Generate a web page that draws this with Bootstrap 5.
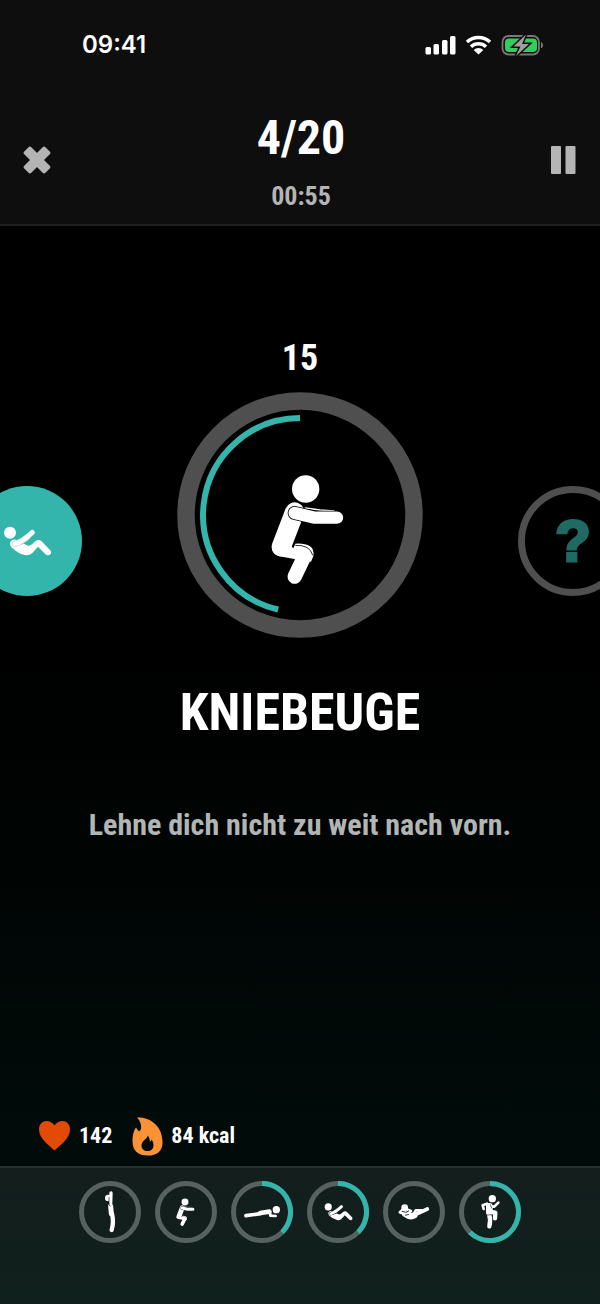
<!DOCTYPE html>
<html lang="de">
<head>
<meta charset="utf-8">
<meta name="viewport" content="width=device-width, initial-scale=1">
<title>Kniebeuge – Workout</title>
<link href="https://cdn.jsdelivr.net/npm/bootstrap@5.3.0/dist/css/bootstrap.min.css" rel="stylesheet">
<style>
  :root { --teal: #33b5ac; --ring: #4f4f4f; }
  body {
    font-family: "Roboto Condensed", "Liberation Sans Narrow", "Liberation Sans", sans-serif;
    font-weight: 700;
    color: #fff;
    background: linear-gradient(#000 50%, #010f0c) #000;
  }
  svg { display: block; }
  .top-panel { background: #0e0e0e; border-bottom: 2px solid #1f1f1f; }
  .status-bar { font: 600 24px/32px Inter, sans-serif; padding: 29px 55px 0 82px; }
  .top-controls { padding: 47px 24px 12px 23px; }
  .icon-btn { color: #b4b4b4; background: none; border: 0; padding: 0; }
  .round-count { font-size: 48px; line-height: 60px; font-weight: 700; }
  .time-left { font-size: 26px; line-height: 32px; color: #b4b4b4; margin-top: 12px; }
  .reps { font-size: 36px; line-height: 40px; margin-top: 112px; }
  .exercise-strip { margin: 14px -28px 0; }
  .side-disc { width: 110px; height: 110px; margin-bottom: 42px; }
  .done-disc { background: var(--teal); color: #8fd4cf; }
  .next-disc { border: 7px solid var(--ring); color: #1f6a63; font: 700 58px/60px "Liberation Sans", sans-serif; -webkit-text-stroke: 3px #1f6a63; }
  .exercise-name { font-size: 52px; line-height: 60px; font-weight: 700; margin: 45px 0 0; }
  .hint { font-size: 30px; line-height: 36px; color: #b1b5b4; margin: 64px 0 0; }
  .stats { font-size: 22px; line-height: 40px; padding: 0 38px 10px; }
  .bottom-panel { color: #131e1d; background: linear-gradient(#131e1d, #10201c); border-top: 2px solid #26302f; padding: 13px 0 61px; gap: 14px; }
  .bone { fill: none; stroke: #fff; stroke-linecap: round; stroke-linejoin: round; }
  .track { fill: none; stroke: #576160; stroke-width: 15; }
  .done-part { fill: none; stroke: var(--teal); stroke-width: 15; }
</style>
</head>
<body class="min-vh-100 d-flex flex-column overflow-x-hidden">

<svg width="0" height="0" class="position-absolute" aria-hidden="true">
  <symbol id="squat" viewBox="0 0 330 390" overflow="visible">
    <circle cx="167" cy="72" r="41" fill="#fff"/>
    <path class="bone" stroke-width="5" d="M166 129 210 135 252 138"/>
    <path class="bone" stroke-width="58" d="M134 141 94 245"/>
    <path fill="#fff" d="M66 250 100 220 130 250 136 236Q164 234 180 244 194 254 190 274L183 290 137 283 88 274Q66 268 66 250Z"/>
    <path class="bone" stroke-width="43" d="M166 268 134 335"/>
    <path class="bone" stroke-width="2.500" style="stroke:#000" d="M137 241Q180 239 188 270"/>
    <path class="bone" stroke-width="42" style="stroke:#000" d="M134 144 195 158 255 158"/>
    <path class="bone" stroke-width="37" d="M134 144 195 158 261 158"/>
  </symbol>
  <symbol id="situp" viewBox="0 0 164 220" overflow="visible">
    <circle cx="30" cy="172" r="18" fill="#fff"/>
    <path fill="#fff" d="M31 200Q38 190 50 194L84 211Q92 212 104 199Q115 190 125 198L152 226Q156 236 147 239Q141 241 135 235L114 214 97 233Q87 242 74 239Q52 233 36 217Q28 210 31 200Z"/>
    <path class="bone" stroke-width="18" style="stroke:currentColor" d="M44 206Q66 200 82 186"/>
    <path class="bone" stroke-width="15" d="M44 206Q66 200 97 171"/>
  </symbol>
</svg>

<header class="top-panel">
  <div class="status-bar d-flex justify-content-between align-items-center">
    <span>09:41</span>
    <svg width="120" height="24" viewBox="0 0 120 24" role="img" aria-label="Empfang, WLAN, Akku lädt">
      <g fill="#fff">
        <rect x="0.500" y="14" width="5.500" height="7.500" rx="1.500"/><rect x="8.500" y="11" width="5.500" height="10.500" rx="1.500"/>
        <rect x="17" y="7" width="5.500" height="14.500" rx="1.500"/><rect x="25" y="3" width="5.500" height="18.500" rx="1.500"/>
        <path d="M48.700 17a6.800 6.800 0 0 1 9.600 0L53.500 21.500Z"/>
      </g>
      <g fill="none" stroke="#fff" stroke-width="3.500"><path d="M42 9a17 17 0 0 1 23 0"/><path d="M46 13.700a11 11 0 0 1 15 0"/></g>
      <rect x="77.500" y="3" width="36.500" height="18.500" rx="6" fill="none" stroke="#777" stroke-width="1.800"/>
      <path d="M116.500 9.500q2.500 2.500 0 5.500z" fill="#777" stroke="#777"/>
      <rect x="80" y="5.500" width="32" height="13.500" rx="4" fill="#32cd5a"/>
      <path d="M101 1.500 88.500 13.500h7L91 23l13-12h-7Z" fill="#a0a0a0" stroke="#0e0e0e" stroke-width="3" paint-order="stroke"/>
    </svg>
  </div>
  <div class="top-controls d-flex justify-content-between align-items-center">
    <button type="button" class="icon-btn" aria-label="Beenden">
      <svg width="28" height="28" viewBox="-14 -14 28 28" fill="currentColor"><rect x="-15" y="-5" width="30" height="10" rx="2" transform="rotate(45)"/><rect x="-15" y="-5" width="30" height="10" rx="2" transform="rotate(-45)"/></svg>
    </button>
    <div class="text-center">
      <h1 class="round-count m-0">4/20</h1>
      <div class="time-left">00:55</div>
    </div>
    <button type="button" class="icon-btn" aria-label="Pause">
      <svg width="25" height="28" viewBox="0 0 25 28" fill="currentColor"><rect width="10" height="28" rx="1"/><rect x="14.500" width="10" height="28" rx="1"/></svg>
    </button>
  </div>
</header>

<main class="flex-grow-1 text-center overflow-hidden">
  <div class="reps">15</div>
  <div class="exercise-strip d-flex justify-content-between align-items-end">
    <div class="side-disc done-disc rounded-circle">
      <svg width="110" height="110" viewBox="-84 32 330 330" role="img" aria-label="Sit-up"><use href="#situp" width="164" height="220"/></svg>
    </div>
    <svg width="246" height="246" viewBox="-123 -123 246 246" role="img" aria-label="Kniebeuge">
      <circle r="114" fill="none" stroke="#4f4f4f" stroke-width="17.500"/>
      <path d="M0-97A97 97 0 0 0-21.800 94.500" fill="none" stroke="#33b5ac" stroke-width="6"/>
      <use href="#squat" x="-50" y="-50" width="110" height="130"/>
    </svg>
    <div class="side-disc next-disc rounded-circle d-flex align-items-center justify-content-center">?</div>
  </div>
  <h2 class="exercise-name">KNIEBEUGE</h2>
  <p class="hint">Lehne dich nicht zu weit nach vorn.</p>
</main>

<div class="stats d-flex align-items-center">
  <svg class="me-2" width="33" height="32" viewBox="0 0 33 32" role="img" aria-label="Puls"><path fill="#e24a06" d="M16.500 30.500C11 25 1 19 1 9.500 1 4 4.500 1 8.500 1c3.500 0 6 1.500 8 4.500C18.500 2.500 21 1 24.500 1 28.500 1 32 4 32 9.500 32 19 22 25 16.500 30.500Z"/></svg>
  <span class="me-3">142</span>
  <svg class="ms-1 me-2" width="31" height="39" viewBox="0 0 31 39" role="img" aria-label="Kalorien"><path fill="#fb9236" fill-rule="evenodd" d="M5 .5C18-.5 30 9 30.500 24 31 34 25 38.500 16 38.500 6 38.500 .5 34 .5 24 .5 18 2 13 4 10.500L6 13.500C7 15 8 14 9 12 9.500 8 8.500 4 5 .5ZM15.500 18.500C16 22 9.500 23 9.500 28.500 9.500 32 12 34 15.500 34 19 34 21.500 32 21.500 28 21.500 26 20.500 23.500 19.500 22.500Q19 25 18 24.500C17.500 22 17.500 20 15.500 18.500Z"/></svg>
  <span>84 kcal</span>
</div>

<footer class="bottom-panel d-flex justify-content-center">
  <svg width="62" height="62" viewBox="0 0 186 186" role="img" aria-label="Strecken">
    <circle class="track" cx="93" cy="93" r="85.500"/>
    <circle cx="88" cy="51" r="10" fill="#fff"/>
    <path class="bone" stroke-width="10" d="M96 36 95 68"/><path class="bone" stroke-width="15" d="M95 76 97 98"/><path class="bone" stroke-width="13" d="M99 98Q105 122 98 147"/>
    <path fill="none" stroke="currentColor" stroke-width="2" d="M90 48v24l5 4"/>
  </svg>
  <svg width="62" height="62" viewBox="0 0 186 186" role="img" aria-label="Kniebeuge">
    <circle class="track" cx="93" cy="93" r="85.500"/>
    <use href="#squat" x="48" y="45" width="83" height="98"/>
  </svg>
  <svg width="62" height="62" viewBox="0 0 186 186" role="img" aria-label="Unterarmstütz">
    <circle class="track" cx="93" cy="93" r="85.500"/><path class="done-part" d="M93 7.500A85.500 85.500 0 0 1 153.500 153.500"/>
    <circle cx="136" cy="86" r="11" fill="#fff"/>
    <path class="bone" stroke-width="11" d="M45 104 88 98"/><path class="bone" stroke-width="14" d="M88 96 115 92"/><path class="bone" stroke-width="8" d="M117 92 118 104 134 105"/>
  </svg>
  <svg width="62" height="62" viewBox="0 0 186 186" role="img" aria-label="Sit-up">
    <circle class="track" cx="93" cy="93" r="85.500"/><path class="done-part" d="M93 7.500A85.500 85.500 0 0 1 153.500 153.500"/>
    <use href="#situp" x="46" y="-24" width="97" height="130"/>
  </svg>
  <svg width="62" height="62" viewBox="0 0 186 186" role="img" aria-label="Crunch">
    <circle class="track" cx="93" cy="93" r="85.500"/>
    <circle cx="65" cy="80" r="10" fill="#fff"/>
    <path class="bone" stroke-width="9" d="M64 82 51 94 68 99"/>
    <path class="bone" stroke-width="19" d="M67 99Q82 110 94 103"/>
    <path class="bone" stroke-width="11" d="M90 104 112 94 133 84"/><path class="bone" stroke-width="8" d="M92 100 98 88 116 88"/>
    <path class="bone" stroke-width="8" d="M74 86 84 90 74 98"/><path fill="none" stroke="currentColor" stroke-width="2.500" d="M56 91 70 94 78 89M66 103l12-3"/>
  </svg>
  <svg width="62" height="62" viewBox="0 0 186 186" role="img" aria-label="Knieheben">
    <circle class="track" cx="93" cy="93" r="85.500"/><path class="done-part" d="M93 7.500A85.500 85.500 0 1 1 32.500 153.500"/>
    <circle cx="100" cy="53" r="11" fill="#fff"/>
    <path class="bone" stroke-width="20" d="M91 76 91 94"/><path class="bone" stroke-width="8" d="M84 68 71 73 74 84M96 76 106 77 118 65"/>
    <path class="bone" stroke-width="13" d="M90 98Q96 118 91 136M95 93 109 95 108 112"/>
    <path fill="none" stroke="currentColor" stroke-width="2" d="M84 102l16-1M94 70l4 12"/>
  </svg>
</footer>
<script src="https://cdn.jsdelivr.net/npm/bootstrap@5.3.0/dist/js/bootstrap.bundle.min.js"></script>
</body>
</html>
